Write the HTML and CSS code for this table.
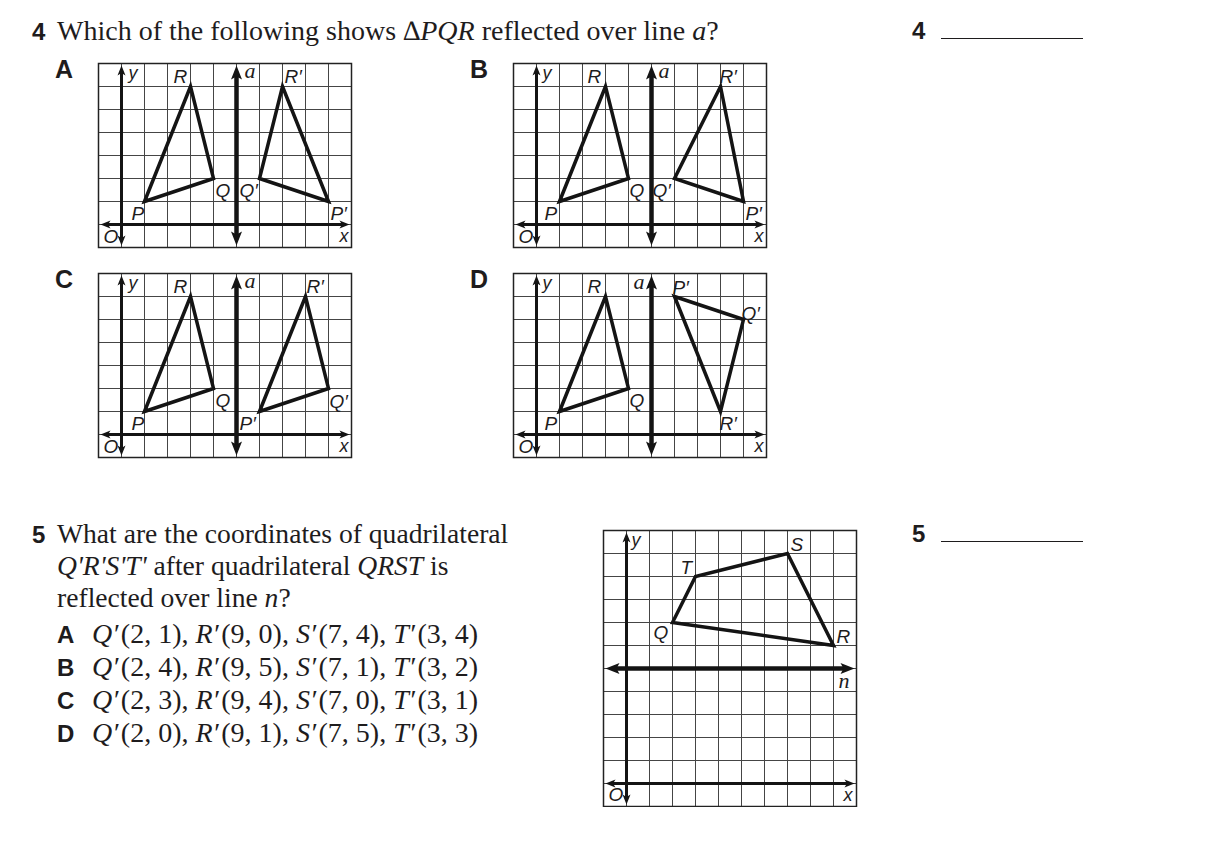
FILE: index.html
```html
<!DOCTYPE html>
<html lang="en">
<head>
<meta charset="utf-8">
<title>Reflections</title>
<link rel="stylesheet" href="styles.css">
</head>
<body>
<main class="page">
  <section class="question q4">
    <div class="q-body">
      <p class="stem"><b class="num">4</b>Which of the following shows ∆<i>PQR</i> reflected over line <i>a</i>?</p>
      <div class="choice-grid">
        <div class="choice">
          <span class="choice-letter">A</span>
          <svg class="graph" width="254" height="185" viewBox="-0.5 -0.5 254 185">
            <path class="grid" d="M23 0V184M46 0V184M69 0V184M92 0V184M115 0V184M138 0V184M161 0V184M184 0V184M207 0V184M230 0V184M0 23H253M0 46H253M0 69H253M0 92H253M0 115H253M0 138H253M0 161H253"/>
            <rect class="frame" x="0" y="0" width="253" height="184"/>
            <path class="axis" d="M9 161H244M23 9V175"/>
            <polygon class="arrow" points="2,161 12,157 9.5,161 12,165"/>
            <polygon class="arrow" points="251,161 241,157 243.5,161 241,165"/>
            <polygon class="arrow" points="23,2 19,12 23,9.5 27,12"/>
            <polygon class="arrow" points="23,182 19,172 23,174.5 27,172"/>
            <path class="refl" d="M138 12V172"/>
            <polygon class="arrow" points="138,2 132.5,16 138,13 143.5,16"/>
            <polygon class="arrow" points="138,182 132.5,168 138,171 143.5,168"/>
            <polygon class="shape" points="46,138 115,115 92,23"/>
            <polygon class="shape" points="230,138 161,115 184,23"/>
            <text class="lbl sm" x="30" y="15">y</text>
            <text class="lbl" x="75" y="19">R</text>
            <text class="lbl serif" x="146" y="14">a</text>
            <text class="lbl" x="186" y="19">R′</text>
            <text class="lbl" x="117" y="133">Q</text>
            <text class="lbl" x="141" y="133">Q′</text>
            <text class="lbl" x="33" y="156">P</text>
            <text class="lbl" x="232" y="156">P′</text>
            <text class="lbl" x="5" y="179">O</text>
            <text class="lbl sm" x="241" y="178">x</text>
          </svg>
        </div>
        <div class="choice">
          <span class="choice-letter">B</span>
          <svg class="graph" width="254" height="185" viewBox="-0.5 -0.5 254 185">
            <path class="grid" d="M23 0V184M46 0V184M69 0V184M92 0V184M115 0V184M138 0V184M161 0V184M184 0V184M207 0V184M230 0V184M0 23H253M0 46H253M0 69H253M0 92H253M0 115H253M0 138H253M0 161H253"/>
            <rect class="frame" x="0" y="0" width="253" height="184"/>
            <path class="axis" d="M9 161H244M23 9V175"/>
            <polygon class="arrow" points="2,161 12,157 9.5,161 12,165"/>
            <polygon class="arrow" points="251,161 241,157 243.5,161 241,165"/>
            <polygon class="arrow" points="23,2 19,12 23,9.5 27,12"/>
            <polygon class="arrow" points="23,182 19,172 23,174.5 27,172"/>
            <path class="refl" d="M138 12V172"/>
            <polygon class="arrow" points="138,2 132.5,16 138,13 143.5,16"/>
            <polygon class="arrow" points="138,182 132.5,168 138,171 143.5,168"/>
            <polygon class="shape" points="46,138 115,115 92,23"/>
            <polygon class="shape" points="230,138 161,115 207,23"/>
            <text class="lbl sm" x="29" y="15">y</text>
            <text class="lbl" x="74" y="19">R</text>
            <text class="lbl serif" x="145" y="14">a</text>
            <text class="lbl" x="206" y="19">R′</text>
            <text class="lbl" x="116" y="133">Q</text>
            <text class="lbl" x="139" y="133">Q′</text>
            <text class="lbl" x="31" y="156">P</text>
            <text class="lbl" x="232" y="156">P′</text>
            <text class="lbl" x="5" y="179">O</text>
            <text class="lbl sm" x="241" y="178">x</text>
          </svg>
        </div>
        <div class="choice">
          <span class="choice-letter">C</span>
          <svg class="graph" width="254" height="185" viewBox="-0.5 -0.5 254 185">
            <path class="grid" d="M23 0V184M46 0V184M69 0V184M92 0V184M115 0V184M138 0V184M161 0V184M184 0V184M207 0V184M230 0V184M0 23H253M0 46H253M0 69H253M0 92H253M0 115H253M0 138H253M0 161H253"/>
            <rect class="frame" x="0" y="0" width="253" height="184"/>
            <path class="axis" d="M9 161H244M23 9V175"/>
            <polygon class="arrow" points="2,161 12,157 9.5,161 12,165"/>
            <polygon class="arrow" points="251,161 241,157 243.5,161 241,165"/>
            <polygon class="arrow" points="23,2 19,12 23,9.5 27,12"/>
            <polygon class="arrow" points="23,182 19,172 23,174.5 27,172"/>
            <path class="refl" d="M138 12V172"/>
            <polygon class="arrow" points="138,2 132.5,16 138,13 143.5,16"/>
            <polygon class="arrow" points="138,182 132.5,168 138,171 143.5,168"/>
            <polygon class="shape" points="46,138 115,115 92,23"/>
            <polygon class="shape" points="161,138 230,115 207,23"/>
            <text class="lbl sm" x="30" y="15">y</text>
            <text class="lbl" x="75" y="19">R</text>
            <text class="lbl serif" x="146" y="14">a</text>
            <text class="lbl" x="208" y="19">R′</text>
            <text class="lbl" x="117" y="133">Q</text>
            <text class="lbl" x="231" y="134">Q′</text>
            <text class="lbl" x="33" y="156">P</text>
            <text class="lbl" x="141" y="156">P′</text>
            <text class="lbl" x="5" y="179">O</text>
            <text class="lbl sm" x="241" y="178">x</text>
          </svg>
        </div>
        <div class="choice">
          <span class="choice-letter">D</span>
          <svg class="graph" width="254" height="185" viewBox="-0.5 -0.5 254 185">
            <path class="grid" d="M23 0V184M46 0V184M69 0V184M92 0V184M115 0V184M138 0V184M161 0V184M184 0V184M207 0V184M230 0V184M0 23H253M0 46H253M0 69H253M0 92H253M0 115H253M0 138H253M0 161H253"/>
            <rect class="frame" x="0" y="0" width="253" height="184"/>
            <path class="axis" d="M9 161H244M23 9V175"/>
            <polygon class="arrow" points="2,161 12,157 9.5,161 12,165"/>
            <polygon class="arrow" points="251,161 241,157 243.5,161 241,165"/>
            <polygon class="arrow" points="23,2 19,12 23,9.5 27,12"/>
            <polygon class="arrow" points="23,182 19,172 23,174.5 27,172"/>
            <path class="refl" d="M138 12V172"/>
            <polygon class="arrow" points="138,2 132.5,16 138,13 143.5,16"/>
            <polygon class="arrow" points="138,182 132.5,168 138,171 143.5,168"/>
            <polygon class="shape" points="46,138 115,115 92,23"/>
            <polygon class="shape" points="161,23 230,46 207,138"/>
            <text class="lbl sm" x="29" y="15">y</text>
            <text class="lbl" x="74" y="19">R</text>
            <text class="lbl serif" x="120" y="15">a</text>
            <text class="lbl" x="159" y="20">P′</text>
            <text class="lbl" x="228" y="46">Q′</text>
            <text class="lbl" x="116" y="133">Q</text>
            <text class="lbl" x="206" y="156">R′</text>
            <text class="lbl" x="31" y="156">P</text>
            <text class="lbl" x="5" y="179">O</text>
            <text class="lbl sm" x="241" y="178">x</text>
          </svg>
        </div>
      </div>
    </div>
    <div class="answer"><b class="num">4</b><span class="blank"></span></div>
  </section>

  <section class="question q5">
    <div class="q-body q5-body">
      <div class="q5-text">
        <div class="stem stem-flex">
          <b class="num">5</b>
          <p class="stem-text">What are the coordinates of quadrilateral<br><i>Q'R'S'T'</i> after quadrilateral <i>QRST</i> is<br>reflected over line <i>n</i>?</p>
        </div>
        <ol class="options">
          <li><b class="opt-letter">A</b><span><i>Q′</i>(2, 1), <i>R′</i>(9, 0), <i>S′</i>(7, 4), <i>T′</i>(3, 4)</span></li>
          <li><b class="opt-letter">B</b><span><i>Q′</i>(2, 4), <i>R′</i>(9, 5), <i>S′</i>(7, 1), <i>T′</i>(3, 2)</span></li>
          <li><b class="opt-letter">C</b><span><i>Q′</i>(2, 3), <i>R′</i>(9, 4), <i>S′</i>(7, 0), <i>T′</i>(3, 1)</span></li>
          <li><b class="opt-letter">D</b><span><i>Q′</i>(2, 0), <i>R′</i>(9, 1), <i>S′</i>(7, 5), <i>T′</i>(3, 3)</span></li>
        </ol>
      </div>
      <svg class="graph graph-tall" width="254" height="277" viewBox="-0.5 -0.5 254 277">
        <path class="grid" d="M23 0V276M46 0V276M69 0V276M92 0V276M115 0V276M138 0V276M161 0V276M184 0V276M207 0V276M230 0V276M0 23H253M0 46H253M0 69H253M0 92H253M0 115H253M0 138H253M0 161H253M0 184H253M0 207H253M0 230H253M0 253H253"/>
        <rect class="frame" x="0" y="0" width="253" height="276"/>
        <path class="axis" d="M9 253H244M23 9V267"/>
        <polygon class="arrow" points="2,253 12,249 9.5,253 12,257"/>
        <polygon class="arrow" points="251,253 241,249 243.5,253 241,257"/>
        <polygon class="arrow" points="23,2 19,12 23,9.5 27,12"/>
        <polygon class="arrow" points="23,274 19,264 23,266.5 27,264"/>
        <path class="refl" d="M12 138H241"/>
        <polygon class="arrow" points="2,138 16,132.5 13,138 16,143.5"/>
        <polygon class="arrow" points="251,138 237,132.5 240,138 237,143.5"/>
        <polygon class="shape" points="69,92 230,115 184,23 92,46"/>
        <text class="lbl sm" x="28" y="15">y</text>
        <text class="lbl" x="77" y="43">T</text>
        <text class="lbl" x="187" y="20">S</text>
        <text class="lbl" x="50" y="108">Q</text>
        <text class="lbl" x="233" y="112">R</text>
        <text class="lbl serif" x="235" y="157">n</text>
        <text class="lbl" x="5" y="270">O</text>
        <text class="lbl sm" x="240" y="270">x</text>
      </svg>
    </div>
    <div class="answer"><b class="num">5</b><span class="blank"></span></div>
  </section>
</main>
</body>
</html>
```

FILE: styles.css
```css
* { box-sizing: border-box; }

body {
  margin: 0;
  background: #ffffff;
  color: #1e1c1d;
  font-family: "Liberation Serif", "Times New Roman", serif;
}

.page {
  padding: 15px 0 0 32px;
}

.question {
  display: grid;
  grid-template-columns: 880px auto;
}

.q5 {
  margin-top: 60px;
}

.stem {
  margin: 0;
  font-size: 28px;
  line-height: 32px;
}

.num {
  display: inline-block;
  width: 25px;
  font-family: "Liberation Sans", Arial, sans-serif;
  font-weight: bold;
  font-size: 24px;
}

.choice-grid {
  display: grid;
  grid-template-columns: 415px 415px;
  row-gap: 25px;
  margin-top: 15px;
  padding-left: 23px;
}

.choice {
  display: flex;
  align-items: flex-start;
}

.choice-letter {
  width: 43px;
  margin-top: -6px;
  font-family: "Liberation Sans", Arial, sans-serif;
  font-weight: bold;
  font-size: 25px;
  line-height: 25px;
}

.graph {
  display: block;
  overflow: visible;
}

.grid {
  fill: none;
  stroke: #454545;
  stroke-width: 1;
}

.frame {
  fill: none;
  stroke: #222;
  stroke-width: 1.5;
}

.axis {
  fill: none;
  stroke: #141414;
  stroke-width: 3;
}

.refl {
  fill: none;
  stroke: #141414;
  stroke-width: 4.5;
}

.arrow {
  fill: #141414;
}

.shape {
  fill: none;
  stroke: #141414;
  stroke-width: 3.5;
  stroke-linejoin: miter;
}

.lbl {
  font-family: "Liberation Sans", Arial, sans-serif;
  font-style: italic;
  font-size: 19px;
  fill: #1e1c1d;
}

.lbl.sm {
  font-size: 18px;
}

.lbl.serif {
  font-family: "Liberation Serif", "Times New Roman", serif;
  font-size: 22px;
}

.answer {
  font-size: 24px;
  line-height: 32px;
}

.answer .num {
  width: auto;
}

.blank {
  display: inline-block;
  width: 142px;
  height: 10px;
  margin-left: 16px;
  border-bottom: 1.5px solid #1e1c1d;
}

.q5-body {
  display: flex;
  align-items: flex-start;
}

.q5-text {
  width: 571px;
}

.stem-flex {
  display: flex;
  align-items: baseline;
}

.stem-text {
  margin: 0;
  font-size: 27.6px;
}

.options {
  list-style: none;
  margin: 4px 0 0;
  padding: 0 0 0 25px;
  font-size: 28px;
  line-height: 32px;
}

.options li {
  display: flex;
  align-items: baseline;
}

.options i {
  padding-right: 2.5px;
}

.opt-letter {
  width: 35px;
  font-family: "Liberation Sans", Arial, sans-serif;
  font-weight: bold;
  font-size: 24px;
}

.graph-tall {
  margin-top: 12px;
}
```
